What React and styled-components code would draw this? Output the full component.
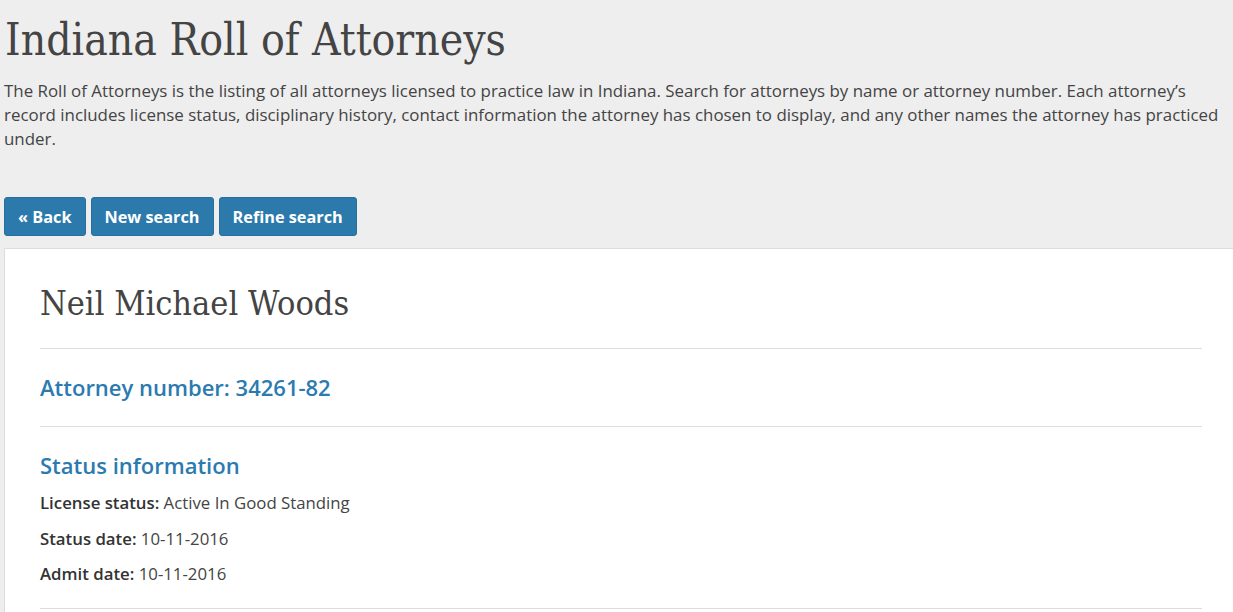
import React from "react";
import styled, { createGlobalStyle } from "styled-components";

const Global = createGlobalStyle`
  html, body { margin: 0; padding: 0; background: #eeeeee; overflow: hidden; }
  body { font-family: "Open Sans", "Liberation Sans", sans-serif; color: #444; }
  * { box-sizing: border-box; }
`;

const Page = styled.div`
  width: 1242px;
  padding: 0 4px;
`;

const Title = styled.h1`
  font-family: "DejaVu Serif", "Liberation Serif", serif;
  font-stretch: condensed;
  font-weight: 300;
  font-size: 44px;
  line-height: 48px;
  color: #444;
  margin: 16px 0 15px 1px;
`;

const Intro = styled.p`
  font-size: 16.9px;
  line-height: 24px;
  margin: 0;
  max-width: 1229px;
  color: #444;
`;

const Actions = styled.div`
  display: flex;
  gap: 5px;
  margin-top: 46px;
`;

const Button = styled.button`
  font-family: "Open Sans", sans-serif;
  font-weight: 700;
  font-size: 16.3px;
  color: #fff;
  background: #2b7aab;
  border: 1px solid #26709e;
  border-radius: 3px;
  height: 39px;
  padding: 0 13px;
  cursor: pointer;
`;

const Card = styled.section`
  margin-top: 12px;
  background: #fff;
  border: 1px solid #dddddd;
  padding: 32px 35px 60px;
`;

const Name = styled.h2`
  font-family: "DejaVu Serif", "Liberation Serif", serif;
  font-stretch: condensed;
  font-weight: 300;
  font-size: 34px;
  line-height: 44px;
  color: #444;
  margin: 0;
  padding-bottom: 23px;
  border-bottom: 1px solid #dddddd;
`;

const Section = styled.div`
  padding: 24px 0 ${(p) => p.$pb || 25}px;
  border-bottom: 1px solid #dddddd;
`;

const SectionTitle = styled.h3`
  font-family: "Open Sans", sans-serif;
  font-weight: 600;
  font-size: 22px;
  line-height: 28px;
  color: #2b7ab0;
  margin: 0;
`;

const Field = styled.p`
  font-size: 16.8px;
  line-height: 24px;
  margin: ${(p) => (p.$first ? "12px" : "11.5px")} 0 0;
  color: #444;
  b { font-weight: 600; color: #333; }
`;

export default function App() {
  return (
    <>
      <Global />
      <Page>
        <Title>Indiana Roll of Attorneys</Title>
        <Intro>
          The Roll of Attorneys is the listing of all attorneys licensed to practice law in Indiana. Search for attorneys by name or attorney number. Each attorney’s record includes license status, disciplinary history, contact information the attorney has chosen to display, and any other names the attorney has practiced under.
        </Intro>
        <Actions>
          <Button>« Back</Button>
          <Button>New search</Button>
          <Button>Refine search</Button>
        </Actions>
        <Card>
          <Name>Neil Michael Woods</Name>
          <Section>
            <SectionTitle>Attorney number: 34261-82</SectionTitle>
          </Section>
          <Section $pb={22}>
            <SectionTitle>Status information</SectionTitle>
            <Field $first><b>License status:</b> Active In Good Standing</Field>
            <Field><b>Status date:</b> 10-11-2016</Field>
            <Field><b>Admit date:</b> 10-11-2016</Field>
          </Section>
        </Card>
      </Page>
    </>
  );
}
